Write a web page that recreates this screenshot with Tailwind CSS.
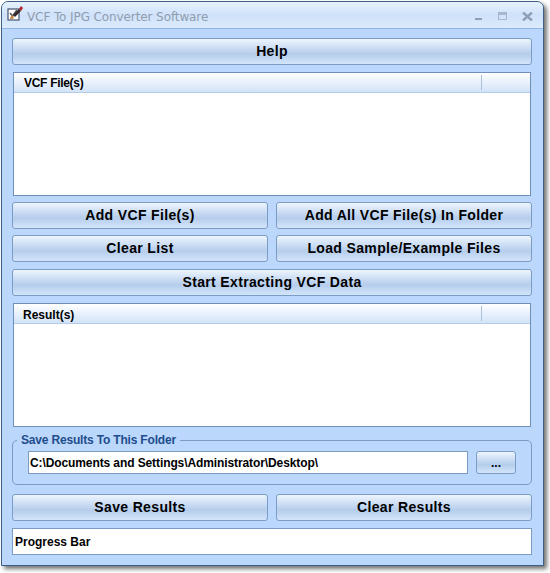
<!DOCTYPE html>
<html lang="en">
<head>
    <meta charset="UTF-8" />
    <title>VCF To JPG Converter Software</title>
    <script src="https://cdn.jsdelivr.net/npm/@tailwindcss/browser@4"></script>
</head>
<body class="bg-white w-[550px] h-[573px] overflow-hidden font-['Liberation_Sans',Arial,sans-serif]">

<!-- window -->
<div class="mt-px ml-px w-[543px] h-[565px] flex flex-col border border-[#3d5f86] rounded-t-[7px] bg-[#bbd7fc] shadow-[3px_3px_4px_rgba(0,0,0,0.55)] overflow-hidden">

    <!-- title bar -->
    <div class="h-[27px] shrink-0 flex items-center pt-[4px] pl-[5px] pr-[10px] border-b border-[#8fb5e6] bg-gradient-to-b from-[#e6f1fe] via-[#cfe2fa] to-[#dcebfd]">
        <svg class="w-[17px] h-[17px] shrink-0 -mt-[7px]" viewBox="0 0 17 17">
            <rect x="1" y="4" width="11" height="11" fill="#fff" stroke="#44546e" stroke-width="1.2"/>
            <path d="M3 8l2.5 3L10 5" fill="none" stroke="#555" stroke-width="1.6"/>
            <path d="M3 13l2-3 2 2-1 2H3z" fill="#c98a4b"/>
            <path d="M6 10l6-6 2 2-6 6z" fill="#33292c"/>
            <path d="M12 4l2-3 2 2-2 3z" fill="#b3232d"/>
        </svg>
        <span class="ml-[3px] font-['DejaVu_Sans',sans-serif] text-[12px] tracking-[-0.1px] text-[#8f9dae]">VCF To JPG Converter Software</span>
        <div class="ml-auto flex items-center mb-[2px]">
            <div class="w-[7px] h-[2px] mt-[5px] bg-[#8c9fb6]"></div>
            <div class="ml-[16px] w-[9px] h-[8px] border border-[#a7b8cc] border-t-[3px]"></div>
            <svg class="ml-[15px] w-[11px] h-[9px]" viewBox="0 0 11 9">
                <path d="M1 0.5l9 8M10 0.5l-9 8" stroke="#8c9fb6" stroke-width="2.4" fill="none"/>
            </svg>
        </div>
    </div>

    <!-- content -->
    <div class="flex flex-col pl-[10px] pr-[10px] pt-[9px]">
        <button class="h-[27px] w-[520px] border border-[#7c9cc4] rounded-[3px] bg-gradient-to-b from-[#eef5fe] via-[#b5cdec] via-60% to-[#d3e5fb] text-[14px] tracking-[0.35px] font-bold text-black">Help</button>

        <div class="mt-[7px] ml-px w-[518px] h-[124px] flex flex-col border border-[#6f8fb8] bg-white">
            <div class="h-[20px] flex items-center border-b border-[#b5cbe6] bg-gradient-to-b from-white to-[#d2e3f9]">
                <span class="flex-1 pl-[10px] text-[12px] tracking-[-0.3px] font-bold text-black">VCF File(s)</span>
                <span class="w-[49px] h-[15px] border-l border-[#a9c0dc]"></span>
            </div>
        </div>

        <div class="mt-[6px] w-[520px] grid grid-cols-2 gap-x-[8px] gap-y-[6px]">
            <button class="h-[27px] border border-[#7c9cc4] rounded-[3px] bg-gradient-to-b from-[#eef5fe] via-[#b5cdec] via-60% to-[#d3e5fb] text-[14px] tracking-[0.35px] font-bold text-black">Add VCF File(s)</button>
            <button class="h-[27px] border border-[#7c9cc4] rounded-[3px] bg-gradient-to-b from-[#eef5fe] via-[#b5cdec] via-60% to-[#d3e5fb] text-[14px] tracking-[0.35px] font-bold text-black">Add All VCF File(s) In Folder</button>
            <button class="h-[27px] border border-[#7c9cc4] rounded-[3px] bg-gradient-to-b from-[#eef5fe] via-[#b5cdec] via-60% to-[#d3e5fb] text-[14px] tracking-[0.35px] font-bold text-black">Clear List</button>
            <button class="h-[27px] border border-[#7c9cc4] rounded-[3px] bg-gradient-to-b from-[#eef5fe] via-[#b5cdec] via-60% to-[#d3e5fb] text-[14px] tracking-[0.35px] font-bold text-black">Load Sample/Example Files</button>
        </div>

        <button class="mt-[7px] h-[27px] w-[520px] border border-[#7c9cc4] rounded-[3px] bg-gradient-to-b from-[#eef5fe] via-[#b5cdec] via-60% to-[#d3e5fb] text-[14px] tracking-[0.35px] font-bold text-black">Start Extracting VCF Data</button>

        <div class="mt-[7px] ml-px w-[518px] h-[124px] flex flex-col border border-[#6f8fb8] bg-white">
            <div class="h-[20px] flex items-center border-b border-[#b5cbe6] bg-gradient-to-b from-white to-[#d2e3f9]">
                <span class="flex-1 pl-[9px] pt-[2px] text-[12px] font-bold text-black">Result(s)</span>
                <span class="w-[49px] h-[15px] border-l border-[#a9c0dc]"></span>
            </div>
        </div>

        <!-- save folder group -->
        <fieldset class="mt-[6px] w-[520px] h-[52px] border border-[#7c9cc4] rounded-[5px] pl-[15px] pr-[15px]">
            <legend class="-ml-[11px] px-[4px] text-[12px] tracking-[-0.18px] font-bold leading-[14px] text-[#1f4d8c]">Save Results To This Folder</legend>
            <div class="flex gap-[8px] mt-[4px]">
                <div class="w-[440px] h-[23px] flex items-center pl-[1px] border border-[#7c9cc4] bg-white text-[12px] tracking-[-0.1px] font-bold text-black">C:\Documents and Settings\Administrator\Desktop\</div>
                <button class="w-[40px] h-[23px] border border-[#7c9cc4] rounded-[3px] bg-gradient-to-b from-[#eef5fe] via-[#b5cdec] via-60% to-[#d3e5fb] text-[12px] font-bold text-black">...</button>
            </div>
        </fieldset>

        <div class="mt-[9px] w-[520px] grid grid-cols-2 gap-x-[8px]">
            <button class="h-[27px] pb-px border border-[#7c9cc4] rounded-[3px] bg-gradient-to-b from-[#eef5fe] via-[#b5cdec] via-60% to-[#d3e5fb] text-[14px] tracking-[0.35px] font-bold text-black">Save Results</button>
            <button class="h-[27px] pb-px border border-[#7c9cc4] rounded-[3px] bg-gradient-to-b from-[#eef5fe] via-[#b5cdec] via-60% to-[#d3e5fb] text-[14px] tracking-[0.35px] font-bold text-black">Clear Results</button>
        </div>

        <div class="mt-[7px] w-[520px] h-[27px] flex items-center pl-[2px] border border-[#7c9cc4] bg-white text-[12px] font-bold text-black">Progress Bar</div>
    </div>
</div>
</body>
</html>
